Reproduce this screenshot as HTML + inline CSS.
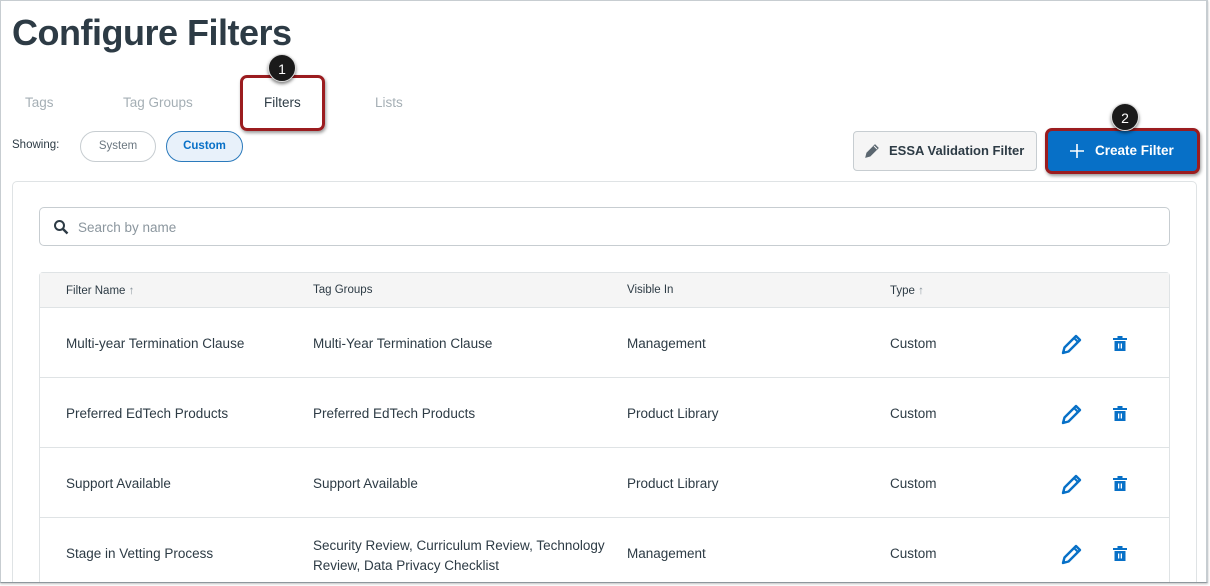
<!DOCTYPE html>
<html><head><meta charset="utf-8"><style>
*{box-sizing:border-box;margin:0;padding:0}
html,body{width:1210px;height:586px;overflow:hidden}
body{background:#fff;font-family:"Liberation Sans",sans-serif;color:#2d3b45;position:relative}
.wrap{position:absolute;left:0;top:0;width:1208px;height:583px;overflow:hidden;border:1px solid #c7cdd1;border-right:2px solid #c7cdd1;border-bottom:1px solid #8e979d;box-shadow:0 1px 2px rgba(0,0,0,.25)}
h1{position:absolute;left:11px;top:11px;font-size:36px;font-weight:bold;color:#2d3b45;letter-spacing:-0.5px}
.tab{position:absolute;top:94px;font-size:13.5px;color:#a5afb5}
.tabbox{position:absolute;left:240px;top:75px;width:85px;height:56px;border:3px solid #9b1c1f;border-radius:7px;box-shadow:1px 2px 3px rgba(0,0,0,.4)}
.badge{position:absolute;width:28px;height:28px;border-radius:50%;background:#1a1a1a;color:#fff;font-size:14px;text-align:center;line-height:28px;box-shadow:0 2px 3px rgba(0,0,0,.5);border:1px solid #ddd}
.pill{position:absolute;top:131px;height:31px;border-radius:16px;font-size:11.5px;text-align:center;line-height:29px}
.panel{position:absolute;left:11px;top:180px;width:1185px;height:420px;border:1px solid #dfe3e5;border-radius:5px}
.search{position:absolute;left:38px;top:206px;width:1131px;height:39px;border:1px solid #c7cdd1;border-radius:5px;font-size:13.5px;color:#8b969e;padding:12px 0 0 38px}
.table{position:absolute;left:38px;top:271px;width:1131px;height:330px;border:1px solid #dfe3e5;border-radius:4px}
.th{position:absolute;top:0;left:0;width:100%;height:35px;background:#f5f5f5;border-bottom:1px solid #dfe3e5;font-size:11.5px;color:#2d3b45}
.th span{position:absolute;top:11px}
.row{position:absolute;left:0;width:100%;height:70px;border-bottom:1px solid #dfe3e5;font-size:13.5px}
.row span{position:absolute;top:28px}
.ic{position:absolute}
</style></head><body>
<div class="wrap">
<h1>Configure Filters</h1>
<div class="tab" style="left:24px">Tags</div>
<div class="tab" style="left:122px">Tag Groups</div>
<div class="tab" style="left:263px;color:#2d3b45">Filters</div>
<div class="tab" style="left:374px">Lists</div>
<div class="tabbox" style="left:239px;top:74px"></div>
<div class="badge" style="left:267px;top:53px">1</div>
<div style="position:absolute;left:11px;top:138px;font-size:11.5px;color:#2d3b45">Showing:</div>
<div class="pill" style="left:79px;top:130px;width:76px;border:1px solid #c7cdd1;color:#6b7780">System</div>
<div class="pill" style="left:165px;top:130px;width:77px;border:1px solid #2b7abc;background:#e8f1fa;color:#0770c7;font-weight:bold">Custom</div>
<div style="position:absolute;left:852px;top:130px;width:184px;height:40px;border:1px solid #c7cdd1;border-radius:4px;background:#f5f5f5;font-size:13px;font-weight:bold;color:#2d3b45;line-height:38px;padding-left:35px;white-space:nowrap">ESSA Validation Filter</div>
<svg class="ic" style="left:862px;top:141px" width="18" height="18" viewBox="0 0 18 18"><path d="M3 15 L4 11 L12 3 L15 6 L7 14 Z M11 4 L14 7" fill="#5b6770" stroke="#5b6770" stroke-width="1.2"/><path d="M11 4 L14 7" stroke="#f5f5f5" stroke-width="1"/></svg>
<div style="position:absolute;left:1044px;top:127px;width:155px;height:46px;border:3px solid #9b1c1f;border-radius:7px;background:#0770c7;box-shadow:1px 2px 3px rgba(0,0,0,.4);color:#fff;font-size:13.5px;font-weight:bold;line-height:40px;padding-left:47px;white-space:nowrap">Create Filter</div>
<svg class="ic" style="left:1068px;top:142px" width="16" height="16" viewBox="0 0 16 16"><path d="M8 1V15M1 8H15" stroke="#fff" stroke-width="1.6"/></svg>
<div class="badge" style="left:1110px;top:102px">2</div>
<div class="panel"></div>
<div class="search">Search by name</div>
<svg class="ic" style="left:52px;top:218px" width="16" height="16" viewBox="0 0 16 16"><circle cx="6.5" cy="6.5" r="4.5" fill="none" stroke="#2d3b45" stroke-width="2"/><path d="M10 10L14.5 14.5" stroke="#2d3b45" stroke-width="2.4"/></svg>
<div class="table">
<div class="th"><span style="left:26px;top:12px">Filter Name <span style="position:static;color:#8b969e">↑</span></span><span style="left:273px">Tag Groups</span><span style="left:587px">Visible In</span><span style="left:850px;top:12px">Type <span style="position:static;color:#8b969e">↑</span></span></div>
<div class="row" style="top:35px"><span style="left:26px">Multi-year Termination Clause</span><span style="left:273px">Multi-Year Termination Clause</span><span style="left:587px">Management</span><span style="left:850px">Custom</span></div>
<div class="row" style="top:105px"><span style="left:26px">Preferred EdTech Products</span><span style="left:273px">Preferred EdTech Products</span><span style="left:587px">Product Library</span><span style="left:850px">Custom</span></div>
<div class="row" style="top:175px"><span style="left:26px">Support Available</span><span style="left:273px">Support Available</span><span style="left:587px">Product Library</span><span style="left:850px">Custom</span></div>
<div class="row" style="top:245px;border:none"><span style="left:26px">Stage in Vetting Process</span><span style="left:273px;top:18px;line-height:20px">Security Review, Curriculum Review, Technology<br>Review, Data Privacy Checklist</span><span style="left:587px">Management</span><span style="left:850px">Custom</span></div>
</div>
<svg width="0" height="0" style="position:absolute"><defs>
<g id="pen"><path d="M3 21 L4.5 15.5 L16 4 L20 8 L8.5 19.5 Z" fill="none" stroke="#0770c7" stroke-width="2.4" stroke-linejoin="round"/><path d="M14 6 L18 10" stroke="#0770c7" stroke-width="2"/><path d="M3 21 L4.5 18.5 L5.5 19.5 Z" fill="#0770c7"/></g>
<g id="trash"><rect x="1" y="3" width="14" height="2" fill="#0770c7"/><rect x="5.5" y="1" width="5" height="2.5" fill="#0770c7"/><path d="M2.5 6H13.5V16H2.5Z" fill="#0770c7"/><rect x="6" y="8.5" width="1.3" height="5" fill="#fff"/><rect x="8.7" y="8.5" width="1.3" height="5" fill="#fff"/></g>
</defs></svg>
<svg class="ic" style="left:1059px;top:331px" width="24" height="24" viewBox="0 0 24 24"><use href="#pen"/></svg>
<svg class="ic" style="left:1111px;top:334px" width="16" height="17" viewBox="0 0 16 17"><use href="#trash"/></svg>
<svg class="ic" style="left:1059px;top:401px" width="24" height="24" viewBox="0 0 24 24"><use href="#pen"/></svg>
<svg class="ic" style="left:1111px;top:404px" width="16" height="17" viewBox="0 0 16 17"><use href="#trash"/></svg>
<svg class="ic" style="left:1059px;top:471px" width="24" height="24" viewBox="0 0 24 24"><use href="#pen"/></svg>
<svg class="ic" style="left:1111px;top:474px" width="16" height="17" viewBox="0 0 16 17"><use href="#trash"/></svg>
<svg class="ic" style="left:1059px;top:541px" width="24" height="24" viewBox="0 0 24 24"><use href="#pen"/></svg>
<svg class="ic" style="left:1111px;top:544px" width="16" height="17" viewBox="0 0 16 17"><use href="#trash"/></svg>
</div>
</body></html>
